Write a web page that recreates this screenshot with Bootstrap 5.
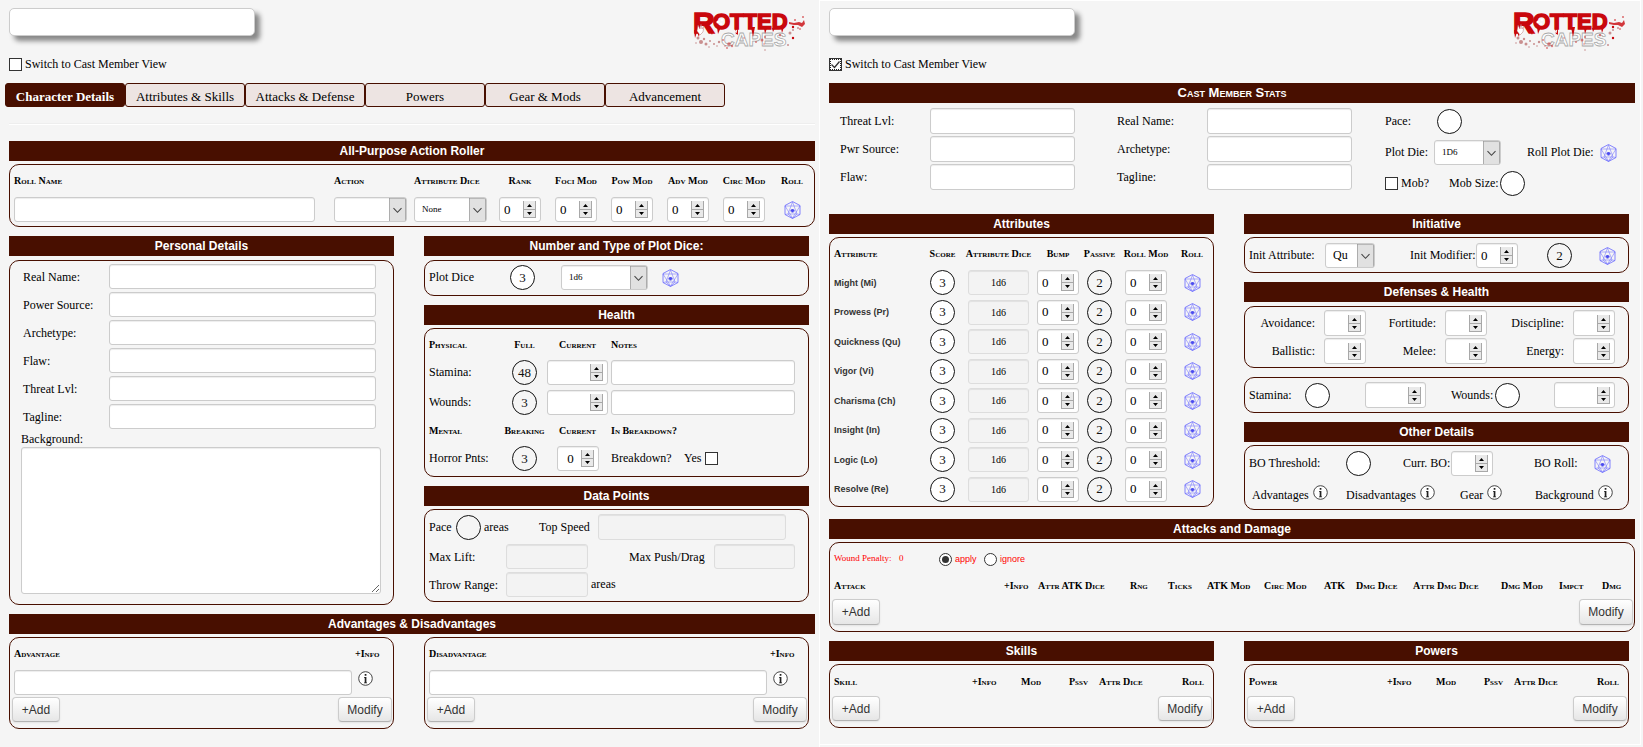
<!DOCTYPE html>
<html lang="en">
<head>
<meta charset="utf-8">
<meta name="viewport" content="width=device-width, initial-scale=1">
<title>Rotted Capes character sheet</title>
<link href="https://cdn.jsdelivr.net/npm/bootstrap@5.3.0/dist/css/bootstrap.min.css" rel="stylesheet">
<style>
:root { --blood: #480f00; --paper: #f5f5f5; --line: #ccc; }
body { background: var(--paper); color: #000; font-family: "Liberation Serif", "Times New Roman", serif; font-size: 12px; line-height: 15px; min-height: 100vh; }

/* two sheets side by side */
.sheets { display: grid; grid-template-columns: 820fr 823fr; min-height: 100vh; }
.sheet { min-width: 0; padding: 8px 4px 8px 9px; border-right: 1px solid #fff; }
.sheet-cast { padding: 7px 5px 0 9px; border: 1px solid #fff; border-left: 0; margin: 0 2px 2px 0; }
.pair { display: grid; grid-template-columns: minmax(0, 1fr) minmax(0, 1fr); column-gap: 30px; padding-right: 6px; }

/* section bars and outlined panes */
.bar { background: var(--blood); color: #fff; font: bold 12px/20px "Liberation Sans", Arial, sans-serif; text-align: center; height: 20px; margin: 9px 0 3px; }
.bar-air { margin-bottom: 4px; }
.bar-caps { font-size: 13px; font-variant: small-caps; }
.pane { border: 1px solid var(--blood); border-radius: 10px; padding-left: 4px; }
.first { margin-top: 0; }
.caps { font-weight: bold; font-size: 10px; line-height: 12px; font-variant: small-caps; white-space: nowrap; }
label { white-space: nowrap; }

/* controls */
.form-control, .form-select { height: 25px; min-height: 0; min-width: 0; padding: 0 4px; border: 1px solid var(--line); border-radius: 3px; background-color: #fff; color: #000; font-size: 13px; line-height: 15px; box-shadow: inset 0 1px 1px rgba(0,0,0,.075); }
.form-control:disabled { background-color: #f3f3f3; border-color: #ddd; opacity: 1; }
.sheet-name { width: 246px; height: 28px; border-radius: 5px; box-shadow: 5px 5px 5px #888; }
.form-select { padding: 0 18px 0 7px; font-size: 9px; background-position: right 0 center; background-size: 17px 24px;
  background-image: url("data:image/svg+xml,%3Csvg xmlns='http://www.w3.org/2000/svg' viewBox='0 0 17 24'%3E%3Crect x='.5' y='.5' width='16' height='23' fill='%23e1e1e1' stroke='%23adadad'/%3E%3Cpath d='M4.5 10.5l4 4 4-4' fill='none' stroke='%23444' stroke-width='1.1'/%3E%3C/svg%3E"); }
.sel { width: 73px; }
.sel-die { width: 67px; }
.sel-plot { width: 87px; margin: 0 14px 0 26px; }
.sel-init { width: 50px; font-size: 12px; }
.num { width: 42px; appearance: textfield; -moz-appearance: textfield; background-repeat: no-repeat; background-position: right 4px center; background-size: 13px 17px; padding-right: 18px;
  background-image: url("data:image/svg+xml,%3Csvg xmlns='http://www.w3.org/2000/svg' viewBox='0 0 13 17'%3E%3Cpath d='M0 0h13v17H0z' fill='%23e9e9e9'/%3E%3Cpath d='M.5 0v17M12.5 0v17M0 8.5h13M0 16.5h13' stroke='%23a8a8a8'/%3E%3Cpath d='M4 6h5L6.500 3zM4 11h5l-2.500 3z'/%3E%3C/svg%3E"); }
.num::-webkit-inner-spin-button { appearance: none; -webkit-appearance: none; margin: 0; }
.num-wide { width: 61px; }
.orb { flex: none; width: 25px; height: 25px; border: 1px solid #111; border-radius: 50%; background: #fff; padding: 0; text-align: center; font: 13px/15px "Liberation Serif", serif; color: #111; }
.orb-clear { background: transparent; }
.form-check-input, .form-check-input[type=checkbox] { flex: none; width: 13px; height: 13px; margin: 0; border: 1px solid #333; border-radius: 0; background-color: #fff; }
.form-check-input[type=radio] { border-radius: 50%; }
.form-check-input:checked { background-color: #fff; border-color: #333; }
.form-check-input:checked[type=checkbox] { outline: 1px dotted #222; outline-offset: -2px; background-size: 11px 11px;
  background-image: url("data:image/svg+xml,%3Csvg xmlns='http://www.w3.org/2000/svg' viewBox='0 0 11 11'%3E%3Cpath d='M1.500 5.500l3 3 5-6' fill='none' stroke='%23333' stroke-width='1.300'/%3E%3C/svg%3E"); }
.form-check-input:checked[type=radio] { background-size: 11px 11px;
  background-image: url("data:image/svg+xml,%3Csvg xmlns='http://www.w3.org/2000/svg' viewBox='0 0 11 11'%3E%3Ccircle cx='5.500' cy='5.500' r='3.500' fill='%23333'/%3E%3C/svg%3E"); }
.btn-sheet { height: 25px; width: 48px; padding: 0; border: 1px solid #ccc; border-bottom-color: #b3b3b3; border-radius: 4px; background: linear-gradient(#fff, #e6e6e6); color: #333; font: 12px/22px "Liberation Sans", Arial, sans-serif; box-shadow: 0 1px 2px rgba(0,0,0,.08); }
.btn-modify { width: 54px; }
.tall { height: 26px; }
.icon-btn { flex: none; border: 0; background: none; padding: 0; display: block; line-height: 0; }
.icon-btn svg, .brand svg { display: block; }
.brand { margin-right: 9px; }
.brand svg { overflow: visible; }
.foot { padding: 0 1px 6px 0; margin-left: -2px; }

/* top of the sheets */
.switch { height: 21px; margin: 4px 0 8px; gap: 3px; }
.tabs { margin-left: -4px; }
.tabs .nav-link { width: 120px; height: 24px; padding: 4px 0 0; border: 1px solid var(--blood); border-radius: 3px; background: #ede4e2; color: #000; font-size: 13px; line-height: 18px; text-align: center; }
.tabs .nav-link.active { background: var(--blood); color: #fff; font-weight: bold; }
.rule { border: 0; border-top: 1px solid #eee; border-bottom: 1px solid #fff; opacity: 1; margin: 16px 0; }

/* action roller */
.roller { display: grid; grid-template-columns: minmax(0, 1fr) 80px 78px repeat(5, 56px) 40px; grid-template-rows: 32px 25px; align-items: center; padding-right: 2px; padding-bottom: 4px; }
.roller > .mid { justify-self: center; }
.roll-name { padding-right: 19px; }

/* personal details */
.personal { padding: 3px 12px 10px 11px; }
.personal .line { padding: 0 5px 3px 2px; }
.personal .line label { flex: none; width: 86px; padding-top: 2px; }
.notes { height: 147px; resize: vertical; }

/* health and data points */
.strip { padding-top: 4px; padding-bottom: 5px; }
.w-plot { width: 81px; }
.health { display: grid; grid-template-columns: 73px 45px 61px minmax(0, 1fr); align-items: center; padding: 0 13px 5px 4px; grid-template-rows: 31px 25px 30px 31px 25px; }
.health .mid { justify-self: center; text-align: center; }
.health > .low { align-self: end; }
.health > label.low { line-height: 25px; }
.after { margin-left: 3px; }
.w-brk { width: 73px; }
.data { padding-top: 4px; padding-bottom: 4px; }
.w-lift { width: 77px; flex: none; padding-top: 2px; } .in-lift { width: 82px; flex: none; }
.w-areas { width: 55px; flex: none; } .w-speed { width: 59px; flex: none; }
.w-pace { width: 27px; flex: none; }
.w-push { width: 85px; flex: none; margin-left: 41px; padding-top: 2px; }
.throw-line { padding-top: 3px; }
.end-22 { margin-right: 22px; } .end-13 { margin-right: 13px; }

/* advantages */
.trait-head { height: 32px; } .trait-info { width: 41px; flex: none; padding-left: 3px; }
.trait-line .trait-info { padding: 1px 0 0 6px; }
.trait-line { padding-bottom: 2px; }

/* cast member stats */
.stats { padding-left: 11px; margin-top: 5px; }
.stats .fields { flex: 1 1 0; min-width: 0; display: grid; grid-template-columns: 90px minmax(0, 1fr); row-gap: 2px; align-items: center; align-content: start; }
.fields-a { margin-right: 42px; } .fields-b { margin-right: 33px; }
.side { width: 250px; padding-top: 1px; gap: 6px; }
.w-pace2 { width: 52px; } .w-die { width: 49px; } .w-roll { width: 73px; margin-left: 26px; }
.w-mob { width: 48px; margin-left: 3px; } .w-size { width: 51px; }
.after-stats { margin-top: 18px; }
.attrs { width: 100%; height: 266px; table-layout: fixed; }
.attrs th, .attrs td { padding: 0; text-align: center; vertical-align: middle; }
.attrs thead th { height: 30px; padding-top: 2px; }
.attrs tbody th { font: bold 9px/12px "Liberation Sans", Arial, sans-serif; color: #333; text-align: left; }
.attrs tr > :first-child { text-align: left; }
.attrs .form-control, .attrs .icon-btn, .attrs .orb { display: block; margin: 0 auto; }
.attrs .dice-field { width: 61px; font-size: 10px; text-align: center; }
.attr-pane { padding-right: 2px; padding-bottom: 2px; }
.init { padding-top: 5px; padding-bottom: 4px; }
.w-initattr { width: 76px; } .w-initmod { width: 66px; margin-left: 35px; }
.ml-29 { margin-left: 29px; } .ml-27 { margin-left: 27px; }
.defs { display: grid; grid-template-columns: 66px 51px 70px 51px 77px 51px; row-gap: 2px; align-items: center; padding-top: 3px; padding-bottom: 3px; }
.defs label { text-align: right; } .defs input { margin-left: 9px; }
.pane-next { margin-top: 9px; }
.vitals { padding-top: 4px; padding-bottom: 4px; }
.w-stam { width: 56px; } .w-wnd { width: 44px; margin-left: 25px; }
.ml-35 { margin-left: 35px; } .ml-34 { margin-left: 34px; }
.other { padding-top: 5px; padding-bottom: 6px; }
.w-bo { width: 97px; } .w-curr { width: 48px; margin-left: 32px; } .w-boroll { width: 60px; margin-left: 41px; }
.refs { display: grid; grid-template-columns: 94px 114px 75px minmax(0, 1fr); margin: 9px 0 0 3px; height: 18px; }
.refs .icon-btn { margin-left: 4px; }
.refs span { line-height: 15px; padding-top: 3px; }

/* attacks, skills, powers */
.penalty { height: 30px; color: #f00; font-size: 9px; }
.penalty .radio-label { font-family: "Liberation Sans", Arial, sans-serif; margin: 2px 0 0 3px; }
.penalty .form-check-input { margin-top: 2px; }
.w-penalty { width: 65px; } .w-count { width: 40px; }
.w-apply { width: 29px; }
.attack-head { display: grid; grid-template-columns: minmax(0, 1fr) 34px 92px 38px 39px 57px 60px 32px 57px 88px 58px 43px 32px; height: 26px; align-items: center; }
.skill-head { display: grid; grid-template-columns: minmax(0, 1fr) 49px 48px 30px 83px 31px; height: 31px; padding-top: 2px; align-items: center; }
</style>
</head>
<body>
<svg width="0" height="0" class="position-absolute" aria-hidden="true">
  <symbol id="die" viewBox="0 0 34 36">
    <g fill="none" stroke="#6464ff" stroke-linejoin="round">
      <path d="M17 1l15 8v18l-15 8-15-8V9z" stroke-width="1.600"/>
      <path d="M2 10h30L17 34z" stroke-width="1"/>
      <path d="M17 2l-9 24h18zM2 27l6-1 9 9 9-9 6 1" stroke-width="1"/>
    </g>
    <path d="M13 18q4-4 8 0v3h-2v2h-4v-2h-2z" fill="#4c4cf0"/>
  </symbol>
  <symbol id="info" viewBox="0 0 15 15">
    <circle cx="7.500" cy="7.500" r="6.800" fill="#fff" stroke="#444" stroke-width="1"/>
    <path d="M6.700 3h1.700v1.700H6.700zM6 6h2.400v5.500H9v.7H6v-.7h.7V6.700H6z" fill="#222"/>
  </symbol>
  <symbol id="splat-back" viewBox="0 0 114 44">
    <g fill="#c98f8f">
      <circle cx="6" cy="30" r="1.500"/><circle cx="9" cy="34" r="2"/><circle cx="14" cy="36" r="1.500"/><circle cx="18" cy="33" r="1"/><circle cx="12" cy="31" r="1.200"/><circle cx="4" cy="35" r=".8"/><circle cx="17" cy="39" r=".8"/><circle cx="22" cy="36" r="1"/><circle cx="25" cy="38" r=".8"/><circle cx="27" cy="34" r="1.200"/><circle cx="73" cy="42" r=".8"/><circle cx="96" cy="37" r="1"/><circle cx="98" cy="25" r="1.500"/><circle cx="101" cy="22" r="1"/><circle cx="106" cy="20" r="1"/>
    </g>
  </symbol>
  <symbol id="splat-mid" viewBox="0 0 114 44">
    <g fill="#c33" opacity=".6">
      <circle cx="37" cy="36" r="1.800"/><circle cx="35" cy="40" r="1"/><circle cx="40" cy="38" r="1.200"/><circle cx="33" cy="38" r=".8"/><circle cx="31" cy="32" r="1"/><circle cx="52" cy="30" r=".8"/><circle cx="64" cy="34" r="1"/><circle cx="70" cy="32" r="1.500"/><circle cx="73" cy="29" r="1"/><circle cx="72" cy="36" r=".8"/><circle cx="88" cy="27" r="1.200"/>
    </g>
  </symbol>
  <symbol id="splat-front" viewBox="0 0 114 44">
    <g fill="#c9070d">
      <path d="M2 22l1 8 2-6 2 5 1-7zM18 22l2 5 1-4zM25 19l1 7 3-7zM43 19l1 8 2-8zM46 19v8l-3-3zM59 19l2 10 2-10zM72 20l1 6 2-6zM80 20l1 4 2-4zM89 20l1 5 2-6z"/>
      <path d="M97 14l5 1 5-1 3 1 2-3 1 4-3 3-4-2-4 0-5-1z" opacity=".8"/>
      <circle cx="103" cy="12" r=".8"/><circle cx="101" cy="19" r="1.200"/><circle cx="111" cy="9" r=".8"/><circle cx="101" cy="30" r="1.200"/><circle cx="108" cy="21" r=".7"/>
    </g>
    <g fill="#fff"><path d="M6 17l2 4 1-5 1 5 2-3-1 6-3 3-3-4z" stroke="#a55" stroke-width=".4"/><circle cx="26" cy="14" r="1.600"/><circle cx="30" cy="12" r="1"/><circle cx="29" cy="16" r="1.200"/></g>
  </symbol>
</svg>

<div class="sheets">
<main class="sheet">
  <header class="d-flex justify-content-between align-items-start">
    <input class="form-control sheet-name" type="text" aria-label="Character name">
    <a href="#" class="brand" aria-label="Rotted Capes"><svg width="114" height="42" viewBox="0 0 114 42">
      <use href="#splat-back" width="114" height="44"/>
      <text x="29" y="38" font-family="'Liberation Sans',Arial,sans-serif" font-weight="bold" font-size="19" fill="#fff" stroke="#aaa" stroke-width=".8">CAPES</text>
      <use href="#splat-mid" width="114" height="44"/>
      <text fill="#c9070d" stroke="#c9070d" stroke-width="1.500" font-family="'Liberation Sans',Arial,sans-serif" font-weight="bold"><tspan x="1" y="25" font-size="30">R</tspan><tspan x="21" y="21" font-size="22">OTTED</tspan></text>
      <use href="#splat-front" width="114" height="44"/>
    </svg></a>
  </header>
  <div class="switch d-flex align-items-center">
    <input class="form-check-input" type="checkbox" id="view1"><label for="view1">Switch to Cast Member View</label>
  </div>
  <nav class="nav tabs">
    <a class="nav-link active" href="#">Character Details</a>
    <a class="nav-link" href="#">Attributes &amp; Skills</a>
    <a class="nav-link" href="#">Attacks &amp; Defense</a>
    <a class="nav-link" href="#">Powers</a>
    <a class="nav-link" href="#">Gear &amp; Mods</a>
    <a class="nav-link" href="#">Advancement</a>
  </nav>
  <hr class="rule">
  <h2 class="bar first">All-Purpose Action Roller</h2>
  <section class="pane roller">
    <label class="caps" for="rollname">Roll Name</label>
    <label class="caps" for="action">Action</label>
    <label class="caps" for="attrdice">Attribute Dice</label>
    <label class="caps mid" for="rank">Rank</label>
    <label class="caps mid" for="foci">Foci Mod</label>
    <label class="caps mid" for="pow">Pow Mod</label>
    <label class="caps mid" for="adv">Adv Mod</label>
    <label class="caps mid" for="circ">Circ Mod</label>
    <span class="caps mid">Roll</span>
    <div class="roll-name"><input class="form-control" type="text" id="rollname"></div>
    <select class="form-select sel" id="action"><option></option></select>
    <select class="form-select sel" id="attrdice"><option>None</option></select>
    <input class="form-control num mid" type="number" id="rank" value="0">
    <input class="form-control num mid" type="number" id="foci" value="0">
    <input class="form-control num mid" type="number" id="pow" value="0">
    <input class="form-control num mid" type="number" id="adv" value="0">
    <input class="form-control num mid" type="number" id="circ" value="0">
    <button class="icon-btn mid" type="button" aria-label="Roll"><svg width="17" height="18"><use href="#die"/></svg></button>
  </section>

  <div class="pair">
    <div>
      <h2 class="bar bar-air">Personal Details</h2>
      <section class="pane personal">
        <div class="line d-flex align-items-center"><label for="p1">Real Name:</label><input class="form-control" type="text" id="p1"></div>
        <div class="line d-flex align-items-center"><label for="p2">Power Source:</label><input class="form-control" type="text" id="p2"></div>
        <div class="line d-flex align-items-center"><label for="p3">Archetype:</label><input class="form-control" type="text" id="p3"></div>
        <div class="line d-flex align-items-center"><label for="p4">Flaw:</label><input class="form-control" type="text" id="p4"></div>
        <div class="line d-flex align-items-center"><label for="p5">Threat Lvl:</label><input class="form-control" type="text" id="p5"></div>
        <div class="line d-flex align-items-center"><label for="p6">Tagline:</label><input class="form-control" type="text" id="p6"></div>
        <label class="d-block" for="p7">Background:</label>
        <textarea class="form-control notes d-block" id="p7"></textarea>
      </section>
    </div>
    <div>
      <h2 class="bar bar-air">Number and Type of Plot Dice:</h2>
      <section class="pane strip d-flex align-items-center">
        <label class="w-plot" for="plotn">Plot Dice</label>
        <input class="orb" id="plotn" type="text" value="3">
        <select class="form-select sel-plot" aria-label="Plot die type"><option>1d6</option></select>
        <button class="icon-btn" type="button" aria-label="Roll plot dice"><svg width="17" height="18"><use href="#die"/></svg></button>
      </section>

      <h2 class="bar">Health</h2>
      <section class="pane health">
        <span class="caps">Physical</span><span class="caps mid">Full</span><span class="caps mid">Current</span><span class="caps after">Notes</span>
        <label for="stam">Stamina:</label>
        <input class="orb orb-clear mid" type="text" value="48" aria-label="Full stamina" readonly>
        <input class="form-control num num-wide" type="number" id="stam">
        <div class="after"><input class="form-control" type="text" aria-label="Stamina notes"></div>
        <label class="low" for="wnd">Wounds:</label>
        <input class="orb orb-clear mid low" type="text" value="3" aria-label="Full wounds" readonly>
        <input class="form-control num num-wide low" type="number" id="wnd">
        <div class="after low"><input class="form-control" type="text" aria-label="Wound notes"></div>
        <span class="caps">Mental</span><span class="caps mid">Breaking</span><span class="caps mid">Current</span><span class="caps after">In Breakdown?</span>
        <label for="horror">Horror Pnts:</label>
        <input class="orb orb-clear mid" type="text" value="3" aria-label="Breaking point" readonly>
        <input class="form-control num mid" type="number" id="horror" value="0">
        <div class="after d-flex align-items-center"><span class="w-brk">Breakdown?</span><label class="me-1" for="brk">Yes</label><input class="form-check-input" type="checkbox" id="brk"></div>
      </section>

      <h2 class="bar">Data Points</h2>
      <section class="pane data">
        <div class="d-flex align-items-center">
          <label class="w-pace" for="pace">Pace</label><input class="orb orb-clear" type="text" id="pace" readonly>
          <span class="after w-areas">areas</span>
          <label class="w-speed" for="speed">Top Speed</label><input class="form-control tall end-22" type="text" id="speed" disabled>
        </div>
        <div class="d-flex align-items-center pt-1">
          <label class="w-lift" for="lift">Max Lift:</label><input class="form-control in-lift" type="text" id="lift" disabled>
          <label class="w-push" for="push">Max Push/Drag</label><input class="form-control end-13" type="text" id="push" disabled>
        </div>
        <div class="d-flex align-items-center throw-line">
          <label class="w-lift" for="throw">Throw Range:</label><input class="form-control in-lift" type="text" id="throw" disabled>
          <span class="after">areas</span>
        </div>
      </section>
    </div>
  </div>

  <h2 class="bar">Advantages &amp; Disadvantages</h2>
  <div class="pair">
    <section class="pane">
      <div class="trait-head d-flex align-items-center justify-content-between"><label class="caps" for="t1">Advantage</label><span class="caps trait-info">+Info</span></div>
      <div class="trait-line d-flex align-items-start"><input class="form-control" type="text" id="t1"><div class="trait-info"><button class="icon-btn" type="button" aria-label="Advantage info"><svg width="15" height="15"><use href="#info"/></svg></button></div></div>
      <div class="foot d-flex justify-content-between"><button class="btn btn-sheet" type="button">+Add</button><button class="btn btn-sheet btn-modify" type="button">Modify</button></div>
    </section>
    <section class="pane">
      <div class="trait-head d-flex align-items-center justify-content-between"><label class="caps" for="t2">Disadvantage</label><span class="caps trait-info">+Info</span></div>
      <div class="trait-line d-flex align-items-start"><input class="form-control" type="text" id="t2"><div class="trait-info"><button class="icon-btn" type="button" aria-label="Disadvantage info"><svg width="15" height="15"><use href="#info"/></svg></button></div></div>
      <div class="foot d-flex justify-content-between"><button class="btn btn-sheet" type="button">+Add</button><button class="btn btn-sheet btn-modify" type="button">Modify</button></div>
    </section>
  </div>
</main>

<section class="sheet sheet-cast">
  <header class="d-flex justify-content-between align-items-start">
    <input class="form-control sheet-name" type="text" aria-label="Cast member name">
    <a href="#" class="brand" aria-label="Rotted Capes"><svg width="114" height="42" viewBox="0 0 114 42">
      <use href="#splat-back" width="114" height="44"/>
      <text x="29" y="38" font-family="'Liberation Sans',Arial,sans-serif" font-weight="bold" font-size="19" fill="#fff" stroke="#aaa" stroke-width=".8">CAPES</text>
      <use href="#splat-mid" width="114" height="44"/>
      <text fill="#c9070d" stroke="#c9070d" stroke-width="1.500" font-family="'Liberation Sans',Arial,sans-serif" font-weight="bold"><tspan x="1" y="25" font-size="30">R</tspan><tspan x="21" y="21" font-size="22">OTTED</tspan></text>
      <use href="#splat-front" width="114" height="44"/>
    </svg></a>
  </header>
  <div class="switch d-flex align-items-center">
    <input class="form-check-input" type="checkbox" id="view2" checked><label for="view2">Switch to Cast Member View</label>
  </div>
  <h2 class="bar bar-caps first">Cast Member Stats</h2>
  <div class="stats d-flex">
    <div class="fields fields-a">
      <label for="c1">Threat Lvl:</label><input class="form-control tall" type="text" id="c1">
      <label for="c2">Pwr Source:</label><input class="form-control tall" type="text" id="c2">
      <label for="c3">Flaw:</label><input class="form-control tall" type="text" id="c3">
    </div>
    <div class="fields fields-b">
      <label for="c4">Real Name:</label><input class="form-control tall" type="text" id="c4">
      <label for="c5">Archetype:</label><input class="form-control tall" type="text" id="c5">
      <label for="c6">Tagline:</label><input class="form-control tall" type="text" id="c6">
    </div>
    <div class="side d-flex flex-column">
      <div class="d-flex align-items-center"><label class="w-pace2" for="c7">Pace:</label><input class="orb" type="text" id="c7"></div>
      <div class="d-flex align-items-center"><label class="w-die" for="c8">Plot Die:</label><select class="form-select sel-die" id="c8"><option>1D6</option></select><span class="w-roll">Roll Plot Die:</span><button class="icon-btn" type="button" aria-label="Roll plot die"><svg width="17" height="18"><use href="#die"/></svg></button></div>
      <div class="d-flex align-items-center"><input class="form-check-input" type="checkbox" id="mob"><label class="w-mob" for="mob">Mob?</label><label class="w-size" for="mobsize">Mob Size:</label><input class="orb" type="text" id="mobsize"></div>
    </div>
  </div>

  <div class="pair after-stats">
    <div>
      <h2 class="bar first">Attributes</h2>
      <section class="pane attr-pane">
        <table class="attrs">
          <colgroup><col><col style="width:37px"><col style="width:75px"><col style="width:44px"><col style="width:39px"><col style="width:54px"><col style="width:38px"></colgroup>
          <thead><tr class="caps"><th>Attribute</th><th>Score</th><th>Attribute Dice</th><th>Bump</th><th>Passive</th><th>Roll Mod</th><th>Roll</th></tr></thead>
          <tbody>
            <tr><th scope="row">Might (Mi)</th><td><input class="orb" type="text" value="3" aria-label="Might score"></td><td><input class="form-control dice-field" type="text" value="1d6" aria-label="Might dice" disabled></td><td><input class="form-control num" type="number" value="0" aria-label="Might bump"></td><td><input class="orb orb-clear" type="text" value="2" aria-label="Might passive" readonly></td><td><input class="form-control num" type="number" value="0" aria-label="Might roll mod"></td><td><button class="icon-btn" type="button" aria-label="Roll Might"><svg width="17" height="18"><use href="#die"/></svg></button></td></tr>
            <tr><th scope="row">Prowess (Pr)</th><td><input class="orb" type="text" value="3" aria-label="Prowess score"></td><td><input class="form-control dice-field" type="text" value="1d6" aria-label="Prowess dice" disabled></td><td><input class="form-control num" type="number" value="0" aria-label="Prowess bump"></td><td><input class="orb orb-clear" type="text" value="2" aria-label="Prowess passive" readonly></td><td><input class="form-control num" type="number" value="0" aria-label="Prowess roll mod"></td><td><button class="icon-btn" type="button" aria-label="Roll Prowess"><svg width="17" height="18"><use href="#die"/></svg></button></td></tr>
            <tr><th scope="row">Quickness (Qu)</th><td><input class="orb" type="text" value="3" aria-label="Quickness score"></td><td><input class="form-control dice-field" type="text" value="1d6" aria-label="Quickness dice" disabled></td><td><input class="form-control num" type="number" value="0" aria-label="Quickness bump"></td><td><input class="orb orb-clear" type="text" value="2" aria-label="Quickness passive" readonly></td><td><input class="form-control num" type="number" value="0" aria-label="Quickness roll mod"></td><td><button class="icon-btn" type="button" aria-label="Roll Quickness"><svg width="17" height="18"><use href="#die"/></svg></button></td></tr>
            <tr><th scope="row">Vigor (Vi)</th><td><input class="orb" type="text" value="3" aria-label="Vigor score"></td><td><input class="form-control dice-field" type="text" value="1d6" aria-label="Vigor dice" disabled></td><td><input class="form-control num" type="number" value="0" aria-label="Vigor bump"></td><td><input class="orb orb-clear" type="text" value="2" aria-label="Vigor passive" readonly></td><td><input class="form-control num" type="number" value="0" aria-label="Vigor roll mod"></td><td><button class="icon-btn" type="button" aria-label="Roll Vigor"><svg width="17" height="18"><use href="#die"/></svg></button></td></tr>
            <tr><th scope="row">Charisma (Ch)</th><td><input class="orb" type="text" value="3" aria-label="Charisma score"></td><td><input class="form-control dice-field" type="text" value="1d6" aria-label="Charisma dice" disabled></td><td><input class="form-control num" type="number" value="0" aria-label="Charisma bump"></td><td><input class="orb orb-clear" type="text" value="2" aria-label="Charisma passive" readonly></td><td><input class="form-control num" type="number" value="0" aria-label="Charisma roll mod"></td><td><button class="icon-btn" type="button" aria-label="Roll Charisma"><svg width="17" height="18"><use href="#die"/></svg></button></td></tr>
            <tr><th scope="row">Insight (In)</th><td><input class="orb" type="text" value="3" aria-label="Insight score"></td><td><input class="form-control dice-field" type="text" value="1d6" aria-label="Insight dice" disabled></td><td><input class="form-control num" type="number" value="0" aria-label="Insight bump"></td><td><input class="orb orb-clear" type="text" value="2" aria-label="Insight passive" readonly></td><td><input class="form-control num" type="number" value="0" aria-label="Insight roll mod"></td><td><button class="icon-btn" type="button" aria-label="Roll Insight"><svg width="17" height="18"><use href="#die"/></svg></button></td></tr>
            <tr><th scope="row">Logic (Lo)</th><td><input class="orb" type="text" value="3" aria-label="Logic score"></td><td><input class="form-control dice-field" type="text" value="1d6" aria-label="Logic dice" disabled></td><td><input class="form-control num" type="number" value="0" aria-label="Logic bump"></td><td><input class="orb orb-clear" type="text" value="2" aria-label="Logic passive" readonly></td><td><input class="form-control num" type="number" value="0" aria-label="Logic roll mod"></td><td><button class="icon-btn" type="button" aria-label="Roll Logic"><svg width="17" height="18"><use href="#die"/></svg></button></td></tr>
            <tr><th scope="row">Resolve (Re)</th><td><input class="orb" type="text" value="3" aria-label="Resolve score"></td><td><input class="form-control dice-field" type="text" value="1d6" aria-label="Resolve dice" disabled></td><td><input class="form-control num" type="number" value="0" aria-label="Resolve bump"></td><td><input class="orb orb-clear" type="text" value="2" aria-label="Resolve passive" readonly></td><td><input class="form-control num" type="number" value="0" aria-label="Resolve roll mod"></td><td><button class="icon-btn" type="button" aria-label="Roll Resolve"><svg width="17" height="18"><use href="#die"/></svg></button></td></tr>
          </tbody>
        </table>
      </section>
    </div>
    <div>
      <h2 class="bar first">Initiative</h2>
      <section class="pane init d-flex align-items-center">
        <label class="w-initattr" for="ia">Init Attribute:</label><select class="form-select sel-init" id="ia"><option>Qu</option></select>
        <label class="w-initmod" for="im">Init Modifier:</label><input class="form-control num" type="number" id="im" value="0">
        <input class="orb orb-clear ml-29" type="text" value="2" aria-label="Passive initiative" readonly>
        <button class="icon-btn ml-27" type="button" aria-label="Roll initiative"><svg width="17" height="18"><use href="#die"/></svg></button>
      </section>
      <h2 class="bar bar-air">Defenses &amp; Health</h2>
      <section class="pane defs">
        <label for="d1">Avoidance:</label><input class="form-control num tall" type="number" id="d1">
        <label for="d2">Fortitude:</label><input class="form-control num tall" type="number" id="d2">
        <label for="d3">Discipline:</label><input class="form-control num tall" type="number" id="d3">
        <label for="d4">Ballistic:</label><input class="form-control num tall" type="number" id="d4">
        <label for="d5">Melee:</label><input class="form-control num tall" type="number" id="d5">
        <label for="d6">Energy:</label><input class="form-control num tall" type="number" id="d6">
      </section>
      <section class="pane pane-next vitals d-flex align-items-center">
        <label class="w-stam" for="v1">Stamina:</label><input class="orb" type="text" id="v1"><input class="form-control num num-wide tall ml-35" type="number" aria-label="Current stamina">
        <label class="w-wnd" for="v2">Wounds:</label><input class="orb" type="text" id="v2"><input class="form-control num num-wide tall ml-34" type="number" aria-label="Current wounds">
      </section>
      <h2 class="bar">Other Details</h2>
      <section class="pane other">
        <div class="d-flex align-items-center">
          <label class="w-bo" for="bo">BO Threshold:</label><input class="orb" type="text" id="bo">
          <label class="w-curr" for="cbo">Curr. BO:</label><input class="form-control num" type="number" id="cbo">
          <span class="w-boroll">BO Roll:</span><button class="icon-btn" type="button" aria-label="Roll BO"><svg width="17" height="18"><use href="#die"/></svg></button>
        </div>
        <div class="refs">
          <div class="d-flex"><span>Advantages</span><button class="icon-btn align-self-start" type="button" aria-label="Advantages info"><svg width="15" height="15"><use href="#info"/></svg></button></div>
          <div class="d-flex"><span>Disadvantages</span><button class="icon-btn align-self-start" type="button" aria-label="Disadvantages info"><svg width="15" height="15"><use href="#info"/></svg></button></div>
          <div class="d-flex"><span>Gear</span><button class="icon-btn align-self-start" type="button" aria-label="Gear info"><svg width="15" height="15"><use href="#info"/></svg></button></div>
          <div class="d-flex"><span>Background</span><button class="icon-btn align-self-start" type="button" aria-label="Background info"><svg width="15" height="15"><use href="#info"/></svg></button></div>
        </div>
      </section>
    </div>
  </div>

  <h2 class="bar">Attacks and Damage</h2>
  <section class="pane">
    <div class="penalty d-flex align-items-center">
      <span class="w-penalty">Wound Penalty:</span><span class="w-count">0</span>
      <input class="form-check-input" type="radio" name="penalty" id="apply" checked><label class="radio-label w-apply" for="apply">apply</label>
      <input class="form-check-input" type="radio" name="penalty" id="ignore"><label class="radio-label" for="ignore">ignore</label>
    </div>
    <div class="attack-head caps"><span>Attack</span><span>+Info</span><span>Attr ATK Dice</span><span>Rng</span><span>Ticks</span><span>ATK Mod</span><span>Circ Mod</span><span>ATK</span><span>Dmg Dice</span><span>Attr Dmg Dice</span><span>Dmg Mod</span><span>Impct</span><span>Dmg</span></div>
    <div class="foot d-flex justify-content-between"><button class="btn btn-sheet tall" type="button">+Add</button><button class="btn btn-sheet btn-modify tall" type="button">Modify</button></div>
  </section>

  <div class="pair">
    <div>
      <h2 class="bar">Skills</h2>
      <section class="pane">
        <div class="skill-head caps"><span>Skill</span><span>+Info</span><span>Mod</span><span>Pssv</span><span>Attr Dice</span><span>Roll</span></div>
        <div class="foot d-flex justify-content-between"><button class="btn btn-sheet" type="button">+Add</button><button class="btn btn-sheet btn-modify" type="button">Modify</button></div>
      </section>
    </div>
    <div>
      <h2 class="bar">Powers</h2>
      <section class="pane">
        <div class="skill-head caps"><span>Power</span><span>+Info</span><span>Mod</span><span>Pssv</span><span>Attr Dice</span><span>Roll</span></div>
        <div class="foot d-flex justify-content-between"><button class="btn btn-sheet" type="button">+Add</button><button class="btn btn-sheet btn-modify" type="button">Modify</button></div>
      </section>
    </div>
  </div>
</section>
</div>
<script src="https://cdn.jsdelivr.net/npm/bootstrap@5.3.0/dist/js/bootstrap.bundle.min.js"></script>
</body>
</html>
